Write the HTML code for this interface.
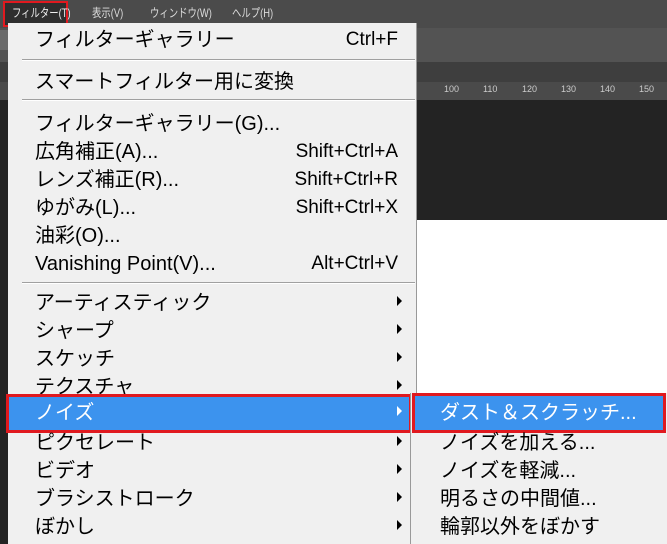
<!DOCTYPE html><html><head><meta charset="utf-8"><style>
body{margin:0;width:667px;height:544px;overflow:hidden;position:relative;background:#fff;font-family:"Liberation Sans","Noto Sans CJK JP",sans-serif}
.a{position:absolute}
.it{position:absolute;left:35px;font-size:20px;line-height:28px;color:#000;white-space:nowrap}
.sc{position:absolute;right:18px;font-size:19px;line-height:28px}
.ar{position:absolute;left:397px;width:0;height:0;border-left:5px solid #000;border-top:5px solid transparent;border-bottom:5px solid transparent}
.sep{position:absolute;left:14px;width:393px;height:1px;background:#a0a0a0;border-bottom:1px solid #fff}
.mb{position:absolute;top:6px;font-size:12px;line-height:14px;color:#ddd;white-space:nowrap;transform-origin:0 0;transform:scaleX(0.78)}
</style></head><body>
<div class="a" style="left:0;top:0;width:667px;height:28px;background:#4b4b4b"></div>
<div class="a" style="left:0;top:28px;width:667px;height:34px;background:#535353"></div>
<div class="a" style="left:0;top:62px;width:667px;height:20px;background:#3e3e3e"></div>
<div class="a" style="left:0;top:82px;width:667px;height:18px;background:#4a4a4a"></div>
<div class="a" style="left:0;top:100px;width:667px;height:120px;background:#232323"></div>
<div class="a" style="left:0;top:220px;width:8px;height:324px;background:#232323"></div>
<div class="a" style="left:0;top:30px;width:8px;height:20px;background:#6a6a6a"></div>
<div class="a" style="left:440px;top:84px;font-size:9px;color:#ccc;word-spacing:0">
<span class="a" style="left:4px">100</span><span class="a" style="left:43px">110</span><span class="a" style="left:82px">120</span><span class="a" style="left:121px">130</span><span class="a" style="left:160px">140</span><span class="a" style="left:199px">150</span></div>
<div class="a" style="left:3px;top:1px;width:61px;height:22px;border:2px solid #e0191f;background:#2e2e2e"></div>
<div class="mb" style="left:12px;color:#eee">フィルター(T)</div>
<div class="mb" style="left:92px">表示(V)</div>
<div class="mb" style="left:150px">ウィンドウ(W)</div>
<div class="mb" style="left:232px">ヘルプ(H)</div>

<div class="a" style="left:8px;top:23px;width:408px;height:521px;background:#f0f0f0;border-right:1px solid #999">
</div>
<div class="a" style="left:8px;top:23px;width:408px;height:521px">
<div class="it" style="top:3px;left:27px">フィルターギャラリー</div><div class="sc" style="top:3px">Ctrl+F</div>
<div class="sep" style="top:36px"></div>
<div class="it" style="top:45px;left:27px">スマートフィルター用に変換</div>
<div class="sep" style="top:76px"></div>
<div class="it" style="top:87px;left:27px">フィルターギャラリー(G)...</div>
<div class="it" style="top:115px;left:27px">広角補正(A)...</div><div class="sc" style="top:115px">Shift+Ctrl+A</div>
<div class="it" style="top:143px;left:27px">レンズ補正(R)...</div><div class="sc" style="top:143px">Shift+Ctrl+R</div>
<div class="it" style="top:171px;left:27px">ゆがみ(L)...</div><div class="sc" style="top:171px">Shift+Ctrl+X</div>
<div class="it" style="top:199px;left:27px">油彩(O)...</div>
<div class="it" style="top:227px;left:27px">Vanishing Point(V)...</div><div class="sc" style="top:227px">Alt+Ctrl+V</div>
<div class="sep" style="top:259px"></div>
</div>
<div class="it" style="top:289px">アーティスティック</div><div class="ar" style="top:296px"></div>
<div class="it" style="top:317px">シャープ</div><div class="ar" style="top:324px"></div>
<div class="it" style="top:345px">スケッチ</div><div class="ar" style="top:352px"></div>
<div class="it" style="top:373px">テクスチャ</div><div class="ar" style="top:380px"></div>
<div class="a" style="left:6px;top:394px;width:400px;height:33px;border:3px solid #e0191f;background:#3c93ee"></div>
<div class="it" style="top:399px;color:#fff">ノイズ</div><div class="ar" style="top:406px;border-left-color:#fff"></div>
<div class="it" style="top:429px">ピクセレート</div><div class="ar" style="top:436px"></div>
<div class="it" style="top:457px">ビデオ</div><div class="ar" style="top:464px"></div>
<div class="it" style="top:485px">ブラシストローク</div><div class="ar" style="top:492px"></div>
<div class="it" style="top:513px">ぼかし</div><div class="ar" style="top:520px"></div>

<div class="a" style="left:410px;top:393px;width:257px;height:151px;background:#f0f0f0;border-left:1px solid #999"></div>
<div class="a" style="left:412px;top:393px;width:248px;height:34px;border:3px solid #e0191f;background:#3c93ee"></div>
<div class="it" style="left:440px;top:399px;color:#fff">ダスト＆スクラッチ...</div>
<div class="it" style="left:440px;top:429px">ノイズを加える...</div>
<div class="it" style="left:440px;top:457px">ノイズを軽減...</div>
<div class="it" style="left:440px;top:485px">明るさの中間値...</div>
<div class="it" style="left:440px;top:513px">輪郭以外をぼかす</div>
</body></html>
